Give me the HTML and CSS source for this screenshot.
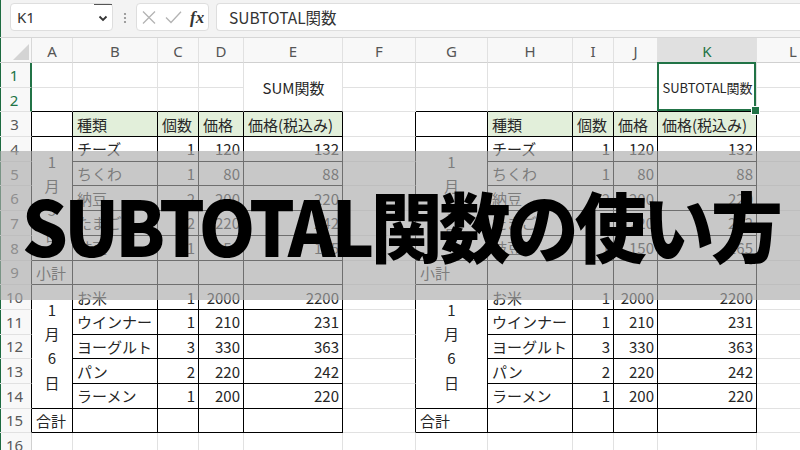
FILE: index.html
```html
<!DOCTYPE html>
<html lang="ja">
<head>
<meta charset="utf-8">
<link rel="stylesheet" href="styles.css">
</head>
<body>
<div class="app">
  <div class="fbar">
    <div class="namebox"><span class="nm">K1</span><span class="dd"><svg width="10" height="7" viewBox="0 0 10 7"><path d="M1.5 1.5 L5 5 L8.5 1.5" fill="none" stroke="#333" stroke-width="1.8"/></svg></span></div>
    <div class="dots"><svg width="4" height="12" viewBox="0 0 4 12"><circle cx="2" cy="2" r="1.1" fill="#8a8a8a"/><circle cx="2" cy="6" r="1.1" fill="#8a8a8a"/><circle cx="2" cy="10" r="1.1" fill="#8a8a8a"/></svg></div>
    <div class="fxbox">
      <svg class="ic" width="14" height="13" viewBox="0 0 14 13"><path d="M1 0.5 L13 12.5 M13 0.5 L1 12.5" stroke="#b3b3b3" stroke-width="1.3" fill="none"/></svg>
      <svg class="ic" width="17" height="13" viewBox="0 0 17 13"><path d="M1 6.5 L6 11.5 L16 0.8" stroke="#b3b3b3" stroke-width="1.3" fill="none"/></svg>
      <span class="fx">fx</span>
    </div>
    <div class="finput">SUBTOTAL関数</div>
  </div>

  <div class="sheet">
    <!-- column headers -->
    <div class="corner"><svg width="32" height="24" viewBox="0 0 32 24"><path d="M29 6 L29 22 L13 22 Z" fill="#d4d4d4"/></svg></div>
    <div class="ch">A</div><div class="ch">B</div><div class="ch">C</div><div class="ch">D</div><div class="ch">E</div><div class="ch">F</div><div class="ch">G</div><div class="ch">H</div><div class="ch">I</div><div class="ch">J</div><div class="ch sel">K</div><div class="ch">L</div>

    <!-- row 1 -->
    <div class="rh sel">1</div>
    <div class="c"></div><div class="c"></div><div class="c"></div><div class="c"></div>
    <div class="c m2 bb ctr">SUM関数</div>
    <div class="c"></div>
    <div class="c"></div><div class="c"></div><div class="c"></div><div class="c"></div>
    <div class="c m2 bb ctr sm selcell">SUBTOTAL関数</div>
    <div class="c"></div>

    <!-- row 2 -->
    <div class="rh sel">2</div>
    <div class="c bb"></div><div class="c bb"></div><div class="c bb"></div><div class="c bb"></div>
    <div class="c"></div>
    <div class="c bb"></div><div class="c bb"></div><div class="c bb"></div><div class="c bb"></div>
    <div class="c"></div>

    <!-- row 3 -->
    <div class="rh tb">3</div>
    <div class="c t"></div><div class="c t hd">種類</div><div class="c t hd">個数</div><div class="c t hd">価格</div><div class="c t hd">価格(税込み)</div>
    <div class="c fr"></div>
    <div class="c t"></div><div class="c t hd">種類</div><div class="c t hd">個数</div><div class="c t hd">価格</div><div class="c t hd">価格(税込み)</div>
    <div class="c"></div>

    <!-- row 4 -->
    <div class="rh tb">4</div>
    <div class="c t m5 vt"><span>1</span><span>月</span><span>5</span><span>日</span></div>
    <div class="c t">チーズ</div><div class="c t r">1</div><div class="c t r">120</div><div class="c t r">132</div>
    <div class="c fr"></div>
    <div class="c t m5 vt"><span>1</span><span>月</span><span>5</span><span>日</span></div>
    <div class="c t">チーズ</div><div class="c t r">1</div><div class="c t r">120</div><div class="c t r">132</div>
    <div class="c"></div>

    <!-- row 5 -->
    <div class="rh tb">5</div>
    <div class="c t">ちくわ</div><div class="c t r">1</div><div class="c t r">80</div><div class="c t r">88</div>
    <div class="c fr"></div>
    <div class="c t">ちくわ</div><div class="c t r">1</div><div class="c t r">80</div><div class="c t r">88</div>
    <div class="c"></div>

    <!-- row 6 -->
    <div class="rh tb">6</div>
    <div class="c t">納豆</div><div class="c t r">2</div><div class="c t r">200</div><div class="c t r">220</div>
    <div class="c fr"></div>
    <div class="c t">納豆</div><div class="c t r">2</div><div class="c t r">200</div><div class="c t r">220</div>
    <div class="c"></div>

    <!-- row 7 -->
    <div class="rh tb">7</div>
    <div class="c t">たまご</div><div class="c t r">2</div><div class="c t r">220</div><div class="c t r">242</div>
    <div class="c fr"></div>
    <div class="c t">たまご</div><div class="c t r">2</div><div class="c t r">220</div><div class="c t r">242</div>
    <div class="c"></div>

    <!-- row 8 -->
    <div class="rh tb">8</div>
    <div class="c t">枝豆</div><div class="c t r">1</div><div class="c t r">150</div><div class="c t r">165</div>
    <div class="c fr"></div>
    <div class="c t">枝豆</div><div class="c t r">1</div><div class="c t r">150</div><div class="c t r">165</div>
    <div class="c"></div>

    <!-- row 9 -->
    <div class="rh tb">9</div>
    <div class="c t">小計</div><div class="c t"></div><div class="c t"></div><div class="c t"></div><div class="c t"></div>
    <div class="c fr"></div>
    <div class="c t">小計</div><div class="c t"></div><div class="c t"></div><div class="c t"></div><div class="c t"></div>
    <div class="c"></div>

    <!-- row 10 -->
    <div class="rh tb">10</div>
    <div class="c t m5 vt"><span>1</span><span>月</span><span>6</span><span>日</span></div>
    <div class="c t">お米</div><div class="c t r">1</div><div class="c t r">2000</div><div class="c t r">2200</div>
    <div class="c fr"></div>
    <div class="c t m5 vt"><span>1</span><span>月</span><span>6</span><span>日</span></div>
    <div class="c t">お米</div><div class="c t r">1</div><div class="c t r">2000</div><div class="c t r">2200</div>
    <div class="c"></div>

    <!-- row 11 -->
    <div class="rh tb">11</div>
    <div class="c t">ウインナー</div><div class="c t r">1</div><div class="c t r">210</div><div class="c t r">231</div>
    <div class="c fr"></div>
    <div class="c t">ウインナー</div><div class="c t r">1</div><div class="c t r">210</div><div class="c t r">231</div>
    <div class="c"></div>

    <!-- row 12 -->
    <div class="rh tb">12</div>
    <div class="c t">ヨーグルト</div><div class="c t r">3</div><div class="c t r">330</div><div class="c t r">363</div>
    <div class="c fr"></div>
    <div class="c t">ヨーグルト</div><div class="c t r">3</div><div class="c t r">330</div><div class="c t r">363</div>
    <div class="c"></div>

    <!-- row 13 -->
    <div class="rh tb">13</div>
    <div class="c t">パン</div><div class="c t r">2</div><div class="c t r">220</div><div class="c t r">242</div>
    <div class="c fr"></div>
    <div class="c t">パン</div><div class="c t r">2</div><div class="c t r">220</div><div class="c t r">242</div>
    <div class="c"></div>

    <!-- row 14 -->
    <div class="rh tb">14</div>
    <div class="c t">ラーメン</div><div class="c t r">1</div><div class="c t r">200</div><div class="c t r">220</div>
    <div class="c fr"></div>
    <div class="c t">ラーメン</div><div class="c t r">1</div><div class="c t r">200</div><div class="c t r">220</div>
    <div class="c"></div>

    <!-- row 15 -->
    <div class="rh tb">15</div>
    <div class="c t">合計</div><div class="c t"></div><div class="c t"></div><div class="c t"></div><div class="c t"></div>
    <div class="c fr"></div>
    <div class="c t">合計</div><div class="c t"></div><div class="c t"></div><div class="c t"></div><div class="c t"></div>
    <div class="c"></div>

    <!-- row 16 -->
    <div class="rh">16</div>
    <div class="c"></div><div class="c"></div><div class="c"></div><div class="c"></div><div class="c"></div><div class="c"></div>
    <div class="c"></div><div class="c"></div><div class="c"></div><div class="c"></div><div class="c"></div><div class="c"></div>
  </div>

  <div class="banner"><h1 class="title">SUBTOTAL関数の使い方</h1></div>
</div>
</body>
</html>
```

FILE: styles.css
```css
* { box-sizing: border-box; margin: 0; padding: 0; }
html, body { width: 800px; height: 450px; overflow: hidden; background: #fff; }
body { font-family: "Noto Sans CJK JP", "Noto Sans", sans-serif; color: #262626; }

.app { position: relative; width: 800px; height: 450px; overflow: hidden; }

/* formula bar */
.fbar {
  height: 38px;
  background: #f3f3f3;
  border-bottom: 1px solid #d6d6d6;
  display: flex;
  align-items: flex-start;
  padding: 3px 0 0 10px;
  box-shadow: inset 1px 0 0 #1d6b40;
}
.namebox {
  width: 103px; height: 28px;
  background: #fff;
  border: 1px solid #dedede;
  border-radius: 4px;
  display: flex; align-items: stretch;
}
.nm {
  font-family: "Noto Sans", sans-serif;
  font-size: 15px; color: #333;
  padding: 6px 0 0 6px;
  line-height: 1;
}
.dd {
  margin-left: auto; width: 18px;
  border-top: 1px solid #555;
  display: flex; align-items: center; justify-content: center;
  padding-top: 1px;
}
.dots { width: 23px; height: 28px; display: flex; align-items: center; justify-content: center; padding-top: 1px; }
.fxbox {
  width: 73px; height: 28px;
  background: #fff;
  border: 1px solid #dedede;
  border-radius: 4px;
  display: flex; align-items: center;
  padding-left: 5px;
  gap: 9px;
}
.fx {
  font-family: "Liberation Serif", serif;
  font-style: italic; font-weight: bold;
  font-size: 17px; color: #333;
  margin-left: -1px;
  line-height: 1;
}
.finput {
  flex: 1; height: 28px;
  margin-left: 7px;
  background: #fff;
  border: 1px solid #dedede;
  border-right: none;
  border-radius: 4px 0 0 4px;
  font-size: 15.5px; color: #333;
  padding: 4px 0 0 12px;
  line-height: 1.2;
}

/* sheet grid */
.sheet {
  display: grid;
  grid-template-columns: 32px 41px 85px 41px 45px 99px 73px 72px 85px 41px 44px 99px 73px;
  grid-template-rows: 25px repeat(16, 24.7px);
  width: 830px;
}
.corner {
  background: #f8f8f8;
  border-right: 1px solid #d8d8d8;
  border-bottom: 1px solid #d0d0d0;
  box-shadow: inset 1px 0 0 #1d6b40;
  overflow: hidden;
}
.corner svg { display: block; }
.ch {
  background: #f8f8f8;
  border-right: 1px solid #e1e1e1;
  border-bottom: 1px solid #d0d0d0;
  font-family: "Noto Sans", sans-serif;
  font-size: 15px; color: #555;
  display: flex; align-items: center; justify-content: center;
  padding-top: 1px;
}
.ch.sel { background: #e0e0e0; color: #217346; }
.rh {
  background: #f8f8f8;
  border-right: 1px solid #d0d0d0;
  border-bottom: 1px solid #e1e1e1;
  box-shadow: inset 1px 0 0 #1d6b40;
  font-family: "Noto Sans", sans-serif;
  font-size: 15px; color: #595959;
  display: flex; align-items: center; justify-content: center;
  padding-right: 2px;
}
.rh.sel { color: #217346; border-right: 2px solid #217346; }
.rh.tb { border-right-color: #000; }

.c {
  border-right: 1px solid #e1e1e1;
  border-bottom: 1px solid #e1e1e1;
  font-size: 15px; line-height: 1;
  display: flex; align-items: center;
  padding: 0 3px 0 4px;
  white-space: nowrap;
  overflow: hidden;
}
.t { border-right-color: #000; border-bottom-color: #000; }
.bb { border-bottom-color: #000; }
.fr { border-right-color: #000; }
.hd { background: #e2efda; }
.r { justify-content: flex-end; }
.ctr { justify-content: center; }
.sm { font-size: 13px; }
.m2 { grid-row: span 2; }
.m5 { grid-row: span 5; }
.vt { flex-direction: column; justify-content: center; align-items: center; padding: 0; }
.vt span { line-height: 24.3px; }

.selcell { position: relative; overflow: visible; }
.selcell::after {
  content: "";
  position: absolute;
  top: -1px; left: -1px; right: 0; bottom: 0;
  border: 2px solid #217346;
}
.selcell::before {
  content: "";
  position: absolute;
  right: -4px; bottom: -4px;
  width: 7px; height: 7px;
  background: #217346;
  border: 1px solid #fff;
  z-index: 2;
}

/* banner overlay */
.banner {
  position: absolute;
  left: 0; top: 151px;
  width: 800px; height: 149px;
  background: rgba(170, 170, 170, 0.65);
  display: flex; align-items: center; justify-content: center;
}
.title {
  font-family: "Noto Sans CJK JP", sans-serif;
  font-weight: 900;
  font-size: 76px;
  letter-spacing: -4px;
  line-height: 1;
  color: #000;
  white-space: nowrap;
  transform: scaleX(0.945);
  margin-top: -4px;
}
```
